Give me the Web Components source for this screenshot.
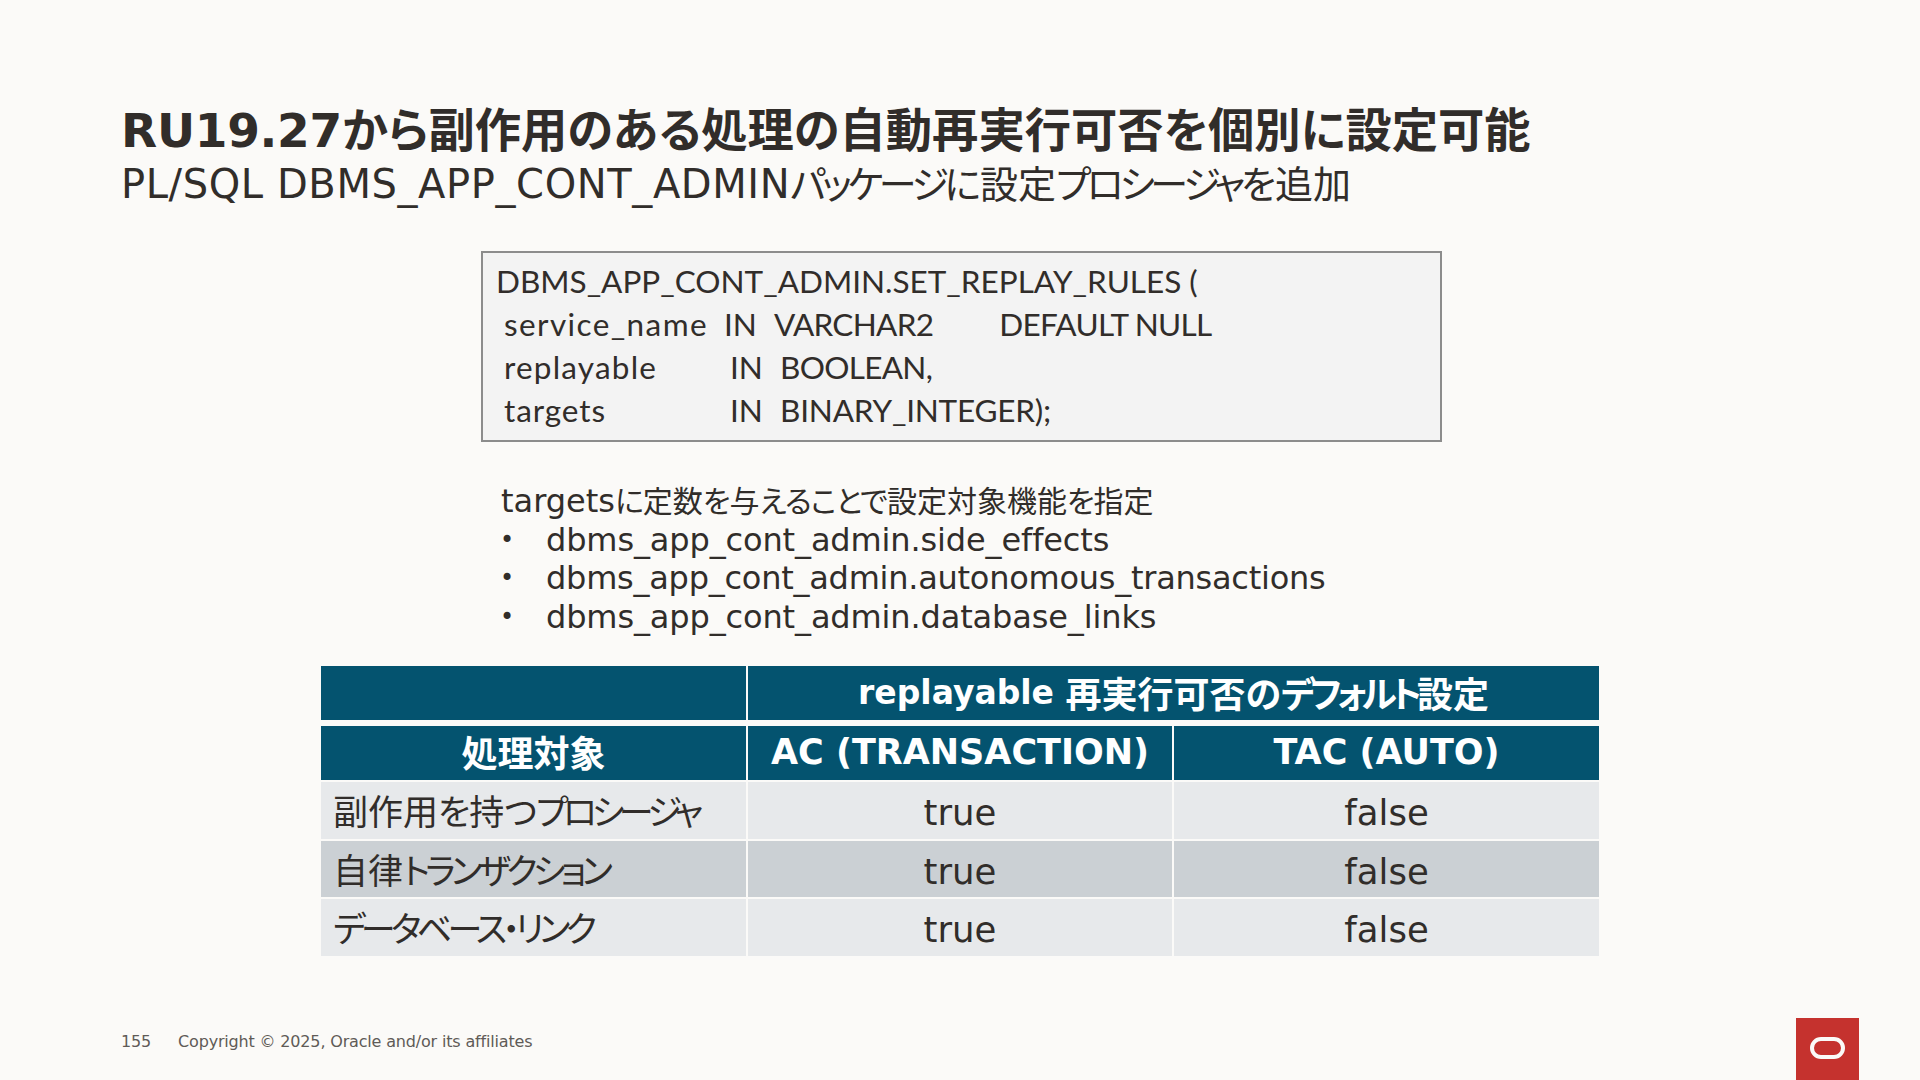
<!DOCTYPE html>
<html lang="ja"><head><meta charset="utf-8"><title>Slide</title>
<style>
html,body{margin:0;padding:0;background:#fbfaf8}
body{width:1920px;height:1080px;overflow:hidden;color:#312d2a;font-family:"DejaVu Sans","Noto Sans CJK JP",sans-serif;font-feature-settings:"palt"}
</style></head><body>
<slide-page>
  <slide-title slot="head" main="RU19.27から副作用のある処理の自動再実行可否を個別に設定可能" sub="PL/SQL DBMS_APP_CONT_ADMINパッケージに設定プロシージャを追加"></slide-title>
  <code-box></code-box>
  <target-list></target-list>
  <data-table></data-table>
  <slide-footer slot="foot"></slide-footer>
</slide-page>
<script>
const runs=t=>t.replace(/[A-Za-z0-9_.\/ ()]+|[ァ-ヶー・]+|[ぁ-ん]+|[^A-Za-z0-9_.\/ ()ァ-ヶー・ぁ-ん]+/g,m=>{
  const c=/^[A-Za-z0-9_.\/ ()]/.test(m)?'lat':/^[ァ-ヶー・]/.test(m)?'kana':/^[ぁ-ん]/.test(m)?'hira':'kanji';
  return `<span class="${c}">${m}</span>`;});
const runCss=`.lat{font-size:var(--lat-size);letter-spacing:var(--lat-ls,0)}.kanji{font-size:var(--cjk-size)}.kana{font-size:var(--cjk-size);letter-spacing:var(--kana-ls,0)}.hira{font-size:var(--cjk-size);letter-spacing:var(--hira-ls,0)}`;
const def=(n,html)=>customElements.define(n,class extends HTMLElement{connectedCallback(){if(this.shadowRoot)return;const s=this.attachShadow({mode:'open'});s.innerHTML=typeof html==='function'?html(this):html;}});
def('slide-page',`<style>:host{display:flex;flex-direction:column;width:1920px;height:1080px;box-sizing:border-box}
main{flex:1;display:flex;flex-direction:column}</style><slot name="head"></slot><main><slot></slot></main><slot name="foot"></slot>`);
def('slide-title',h=>`<style>:host{display:block;padding:103px 0 0 121px;height:148px}${runCss}
.m{--lat-size:47px;--cjk-size:46.3px;font-weight:700;line-height:56px;white-space:nowrap;--lat-ls:-.3px}
.s{--lat-size:40px;--cjk-size:38px;--kana-ls:-4.2px;--hira-ls:-1px;--lat-ls:.6px;line-height:50px;margin-top:-11px;white-space:nowrap}</style>
<div class="m">${runs(h.getAttribute('main'))}</div><div class="s">${runs(h.getAttribute('sub'))}</div>`);
def('code-box',`<style>:host{display:block;box-sizing:border-box;width:961px;height:191px;margin:0 0 0 481px;background:#f3f3f3;border:2px solid #8c8c8c;padding:7px 0 0 13px;font-family:"Lato","Noto Sans CJK JP",sans-serif;font-size:31.5px;line-height:43px;white-space:nowrap}
div{height:43px}span{display:inline-block}.a{padding-left:8px;box-sizing:border-box}.a b{font-weight:400;letter-spacing:1.2px}.b{width:50px}.t{letter-spacing:-.7px}</style>
<div>DBMS_APP_CONT_ADMIN.SET_REPLAY_RULES (</div>
<div><span class="a" style="width:228px"><b style="letter-spacing:1.4px">service_name</b></span><span class="b">IN</span><span class="t">VARCHAR2</span><span style="width:66px"></span><span class="t">DEFAULT NULL</span></div>
<div><span class="a" style="width:234px"><b>replayable</b></span><span class="b">IN</span><span class="t">BOOLEAN,</span></div>
<div><span class="a" style="width:234px"><b style="letter-spacing:.9px">targets</b></span><span class="b">IN</span><span style="letter-spacing:-.2px">BINARY_INTEGER);</span></div>`);
def('target-list',`<style>:host{display:block;margin:40px 0 0 501px;height:153px;font-size:32px;line-height:38.2px;--lat-size:32px;--cjk-size:30px;--kana-ls:-2px;--hira-ls:-1px}${runCss}
ul{list-style:none;margin:0;padding:0;letter-spacing:-.25px}li{display:flex}li.w{letter-spacing:-.13px}li i{font-style:normal;width:45px;font-size:24px;margin-left:-1px;margin-right:1px}</style>
<div>${runs('targetsに定数を与えることで設定対象機能を指定')}</div>
<ul><li class="w"><i>•</i>dbms_app_cont_admin.side_effects</li><li><i>•</i>dbms_app_cont_admin.autonomous_transactions</li><li class="w"><i>•</i>dbms_app_cont_admin.database_links</li></ul>`);
def('data-table',`<style>:host{display:grid;margin:31px 0 0 321px;width:1278px;grid-template-columns:425px 424px 425px;grid-template-rows:54px 58px 57px 56px 57px;column-gap:2px;row-gap:2px;font-size:35.5px;--lat-size:35.5px;--cjk-size:36px;--kana-ls:-5.3px}${runCss}
div{display:flex;align-items:center;justify-content:center;background:#e7e9eb;white-space:nowrap;padding-top:4px;box-sizing:border-box}
.h{background:#04536f;color:#fff;font-weight:700;--lat-size:35px;padding:0 0 2px}.h2{margin-top:4px;height:54px}.l{justify-content:flex-start;padding:0 0 2px 12px;--cjk-size:35px;--hira-ls:-1px}.alt{background:#cbd0d4}
.h span{white-space:pre}.r1{--lat-size:33px;--kana-ls:-5px}.wk{--kana-ls:-4.7px}</style>
<div class="h"></div><div class="h r1" style="grid-column:span 2">${runs('replayable 再実行可否のデフォルト設定')}</div>
<div class="h h2" style="padding-bottom:4px">${runs('処理対象')}</div><div class="h h2">${runs('AC (TRANSACTION)')}</div><div class="h h2">${runs('TAC (AUTO)')}</div>
<div class="l">${runs('副作用を持つプロシージャ')}</div><div>true</div><div>false</div>
<div class="l alt wk">${runs('自律トランザクション')}</div><div class="alt">true</div><div class="alt">false</div>
<div class="l wk">${runs('データベース・リンク')}</div><div>true</div><div>false</div>`);
def('slide-footer',`<style>:host{display:flex;align-items:flex-start;height:62px;padding-left:121px;font-size:16px;color:#5f5b57}
.t{display:flex;gap:27px;height:46px;align-items:center;flex:1;letter-spacing:-.17px}svg{display:block;margin-right:61px}</style>
<div class="t"><span>155</span><span>Copyright © 2025, Oracle and/or its affiliates</span></div>
<svg width="63" height="62" viewBox="0 0 63 62"><rect width="63" height="62" fill="#c5322e"/><rect x="16" y="21" width="31" height="18" rx="9" fill="none" stroke="#fbfaf8" stroke-width="4"/></svg>`);
</script>
</body></html>
